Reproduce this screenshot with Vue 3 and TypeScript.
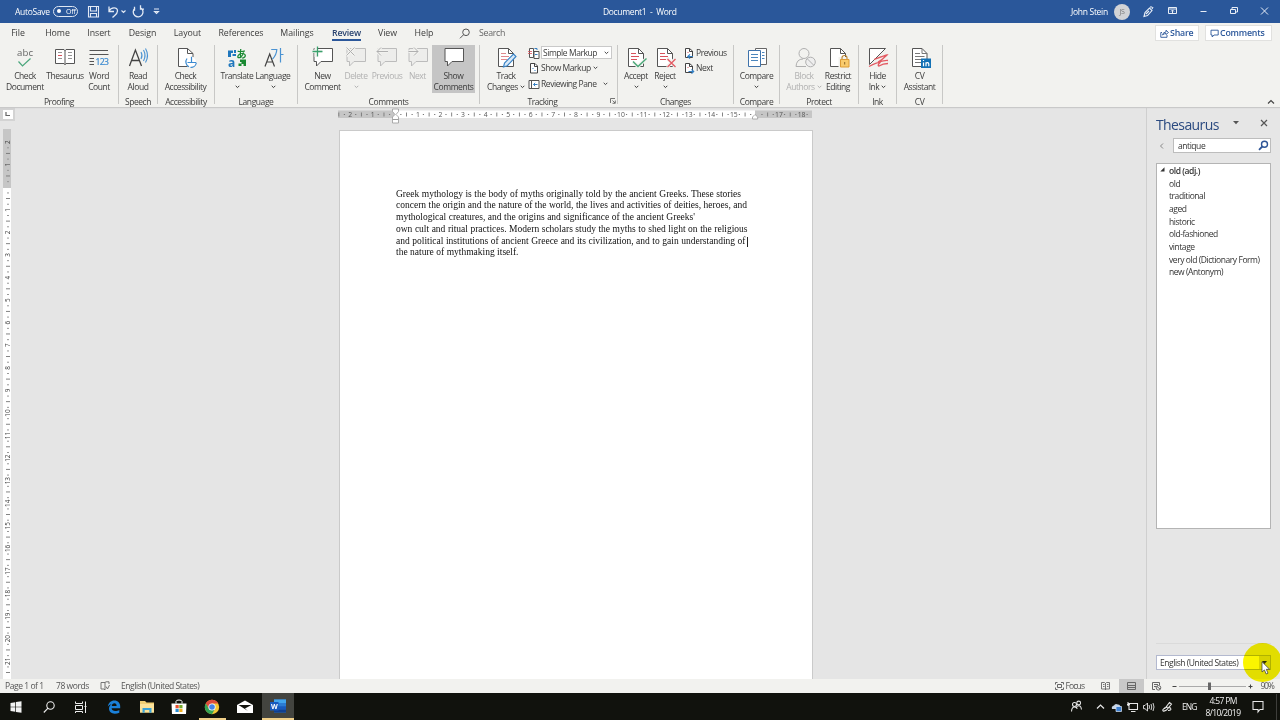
<script setup lang="ts">
interface Btn { id: string; w: number; icon: string; lines: string[]; arrow?: number; dim?: boolean; active?: boolean }
interface Row { icon: string; label: string; arrow?: boolean; box?: boolean }
interface Group { name: string; w: number; pad: number; shift?: number; btns: Btn[]; rows?: Row[]; launcher?: boolean }

const bubble = (stroke: string, fill: string) =>
  `<path d="M-9 3.5H9.5V16.5H-2L-6.5 21V16.5H-9Z" fill="${fill}" stroke="${stroke}"/>`
const pageShape = 'M-7.5 3.5H2.5L7.5 8.5V21.5H-7.5Z'
const redLines = '<path d="M-5 8.5H0M-5 11.5H3M-5 14.5H1" stroke="#d9525c"/>'

const icons: Record<string, string> = {
  check: '<text x="-8" y="11" font-size="9.6" textLength="16" fill="#666">abc</text><path d="M-6.5 16.5L-2.5 21L5.5 13.5" stroke="#4aa67c" stroke-width="1.2"/>',
  book: '<path d="M-9.5 4.5H-1L0 5.5L1 4.5H9.5V18.5H1L0 19.5L-1 18.5H-9.5Z" fill="#fff" stroke="#555"/><path d="M0 5V20" stroke="#555"/><path d="M-7 7.5H-3M-7 13.5H-3M3 7.5H7M3 10.5H7M3 13.5H7" stroke="#888" stroke-width=".9"/><path d="M-7 10.5H-3" stroke="#d9525c"/>',
  count: '<path d="M-9.5 5.5H9M-9.5 9.5H9.5M-9.5 13.5H-5M-9.5 16.5H-5M-9.5 19.5H-5" stroke="#555"/><text x="-3.5" y="20.3" font-size="8.6" textLength="13.5" fill="#3b8ad0" stroke="#3b8ad0" stroke-width=".2">123</text>',
  read: '<path d="M-8.5 21L-2.6 5L3.5 21M-6.4 15.5H1.3" stroke="#444" stroke-width="1.3"/><path d="M3 7Q5 10.5 3 14M5.5 5Q8.5 10.5 5.5 16M7.5 3.5Q11.5 10.5 7.5 17.5" stroke="#4b93d2" stroke-width="1.1"/>',
  access: '<path d="M-7.5 3.5H1.5L7 8.5V21.5H-7.5Z" fill="#fff"/><path d="M1.5 21.5H-7.5V3.5H1.5L7 8.5V12M1.5 3.5V8.5H7" stroke="#555"/><circle cx="5" cy="17" r="5" fill="#fff"/><path d="M1 13.5A5.4 5.4 0 0 0 3 21.7M4.5 22.3A5.4 5.4 0 0 0 10.3 18M5.5 11.7V17.5H10.3M5 17.5H1.5" stroke="#3b8ad0" stroke-width="1.2"/>',
  translate: '<path d="M-9 5.5H-4V8H-6V12H-9ZM-3 5H-1V8H-3Z" fill="#1f77bd"/><path d="M-4.5 10L-1 10" stroke="#1f77bd" stroke-width="2"/><text x="-9" y="21.5" font-size="12" font-weight="700" fill="#1f77bd">a</text><text x="-.7" y="12.5" font-size="10.5" font-weight="700" fill="#1a8a33" font-family="Noto Sans CJK JP">あ</text><path d="M3 14.5H9V21H6.5V19H4.5V21H1.5V18.5H4.5V17H3Z" fill="#1a8a33"/>',
  language: '<path d="M-8 21.5L-3.3 9L1.5 21.5M-6.3 17H-.2" stroke="#444" stroke-width="1.2"/><path d="M-1.8 4.5H3.8Q3.5 10-.5 14M7.5 3V17.5M7.5 9.5H10.5" stroke="#4b93d2" stroke-width="1.2"/>',
  newc: bubble('#555', '#fff') + '<path d="M-7 0V12M-12 6.5H-1" stroke="#f2f2ef" stroke-width="3"/><path d="M-5.5 1.5V11.5M-10.5 6.5H-.5" stroke="#3aa06c" stroke-width="1.3"/>',
  del: bubble('#bcbcbc', '#ededeb') + '<path d="M-9.5 2L-1.5 11M-1.5 2L-9.5 11" stroke="#f2f2ef" stroke-width="3"/><path d="M-9.5 2.5L-1.5 10.5M-1.5 2.5L-9.5 10.5" stroke="#b0b0b0"/>',
  prevc: bubble('#bcbcbc', '#ededeb') + '<path d="M-10 6.5H1M-6 2.5L-10 6.5L-6 10.5" stroke="#f2f2ef" stroke-width="3"/><path d="M-10 6.5H1M-6 2.5L-10 6.5L-6 10.5" stroke="#b0b0b0"/>',
  nextc: bubble('#bcbcbc', '#ededeb') + '<path d="M-9.5 6.5H0M-4 2.5L0 6.5L-4 10.5" stroke="#f2f2ef" stroke-width="3"/><path d="M-9.5 6.5H0M-4 2.5L0 6.5L-4 10.5" stroke="#b0b0b0"/>',
  show: bubble('#555', '#fff'),
  track: `<path d="${pageShape}" fill="#fff" stroke="#555"/><path d="M2.5 3.5V8.5H7.5" stroke="#555"/><path d="M-5 8.5H0M-5 11.5H3M-5 14.5H1" stroke="#e08a8e"/><path d="M-2.5 22L-1.5 18L7.5 9L10 11.5L1.3 20.7Z" fill="#d7e8f7" stroke="#3580c4" stroke-width="1.1"/>`,
  accept: `<path d="${pageShape}" fill="#fff" stroke="#555"/><path d="M2.5 3.5V8.5H7.5" stroke="#555"/>${redLines}<path d="M-3 17L2 21.5L11 13" stroke="#f2f2ef" stroke-width="3.4"/><path d="M-3 16.5L2 21.5L10.5 13.5" stroke="#49a878" stroke-width="1.4"/>`,
  reject: `<path d="${pageShape}" fill="#fff" stroke="#555"/><path d="M2.5 3.5V8.5H7.5" stroke="#555"/>${redLines}<path d="M2 13L11 22M11 13L2 22" stroke="#f2f2ef" stroke-width="3.4"/><path d="M2.5 14L10.5 22M10.5 14L2.5 22" stroke="#e35a62" stroke-width="1.3"/>`,
  compare: '<path d="M-1.5 3.5H9.5V19.5H-1.5Z" fill="#fff" stroke="#666"/><path d="M5 7.5H7.5M5 10.5H7.5M5 13.5H7.5" stroke="#4b86bd"/><path d="M-8.5 5.5H3.5V21.5H-8.5Z" fill="#fff" stroke="#3f73ab"/><path d="M-6 9.5H1M-6 12.5H1M-6 15.5H1" stroke="#4b86bd"/>',
  block: '<circle cx="0" cy="8.5" r="5" stroke="#b0b0b0"/><path d="M-8 21.5Q-7.5 14-1 14M-8 21.5H2" stroke="#b0b0b0"/><circle cx="6.5" cy="17" r="4.8" fill="#eee" stroke="#b0b0b0"/><path d="M3.2 13.7L9.8 20.3" stroke="#b0b0b0"/>',
  restrict: `<path d="${pageShape}" fill="#fff" stroke="#555"/><path d="M2.5 3.5V8.5H7.5" stroke="#555"/><path d="M.5 12H12V24H.5Z" fill="#f2f2ef"/><path d="M4 15V12.8Q4 10.5 6.5 10.5T9 12.8V15" stroke="#b98432" stroke-width="1.1"/><path d="M2.5 14.5H11V22H2.5Z" fill="#f9cb6c" stroke="#dc9b35"/><path d="M6.7 17V19.5" stroke="#8a6427"/>`,
  ink: '<path d="M-8.5 3.5H7.5L-8.5 19.5Z" fill="#fff" stroke="#555"/><path d="M-4 14.5Q8 10 9 10Q4 15 0 17Q8 15 10 15.5M-9 21.5Q0 17 2 17.5Q-1 20.5 1 21Q5 18.5 10 18.5" stroke="#e35a62" stroke-width="1.3"/>',
  cv: '<path d="M-7.5 3.5H2L7 8.5V21.5H-7.5Z" fill="#fff" stroke="#555"/><path d="M2 3.5V8.5H7M-5 8.5H0M-5 11.5H4.5M-5 14.5H4.5M-5 17.5H1" stroke="#777"/><path d="M1 13.5H11V23H1Z" fill="#1371b5"/><path d="M3.5 17.5V21.3M3.5 15V16M6 21.3V17.3M6 18.5Q6.5 17.5 7.6 17.6T8.8 19V21.3" stroke="#fff" stroke-width="1.2"/>',
}

const smallIcons: Record<string, string> = {
  markup: '<path d="M1.5 1.5H5.5V10.5H1.5Z" fill="#fff" stroke="#555"/><path d="M0 4.5H4M0 6.5H4" stroke="#d9525c" stroke-width=".8"/><path d="M6 4.5H11V11.5H6Z" fill="#fff" stroke="#555"/><path d="M7 7.5H9.5" stroke="#3580c4"/><path d="M6.5 1.5H9V3" stroke="#3580c4"/>',
  showm: '<path d="M2.5 1.5H7L9.5 4V11H2.5Z" fill="#fff" stroke="#444"/><path d="M6.5 1.5V4.5H9.5" stroke="#444"/><path d="M4.5 6.5H5.5M6.5 8.5H7.5" stroke="#3580c4"/>',
  pane: '<path d="M1 2.5H11V10.5H1Z" fill="#fff" stroke="#555"/><path d="M3.5 2.5V10.5" stroke="#555"/><path d="M9.5 6.5H5.5M7.2 4.8L5.5 6.5L7.2 8.2" stroke="#3580c4"/>',
  prev: '<path d="M2.5 1.5H6.5L9.5 4V10.5H2.5Z" fill="#fff" stroke="#444"/><path d="M6.5 1.5V4.5H9.5" stroke="#444"/><path d="M4.5 5.5H5.5" stroke="#d9525c"/><path d="M10 9.5H5M7 7.3L4.8 9.5L7 11.7" stroke="#3580c4" stroke-width="1.2"/>',
  next: '<path d="M2.5 1.5H6.5L9.5 4V10.5H2.5Z" fill="#fff" stroke="#444"/><path d="M6.5 1.5V4.5H9.5" stroke="#444"/><path d="M4.5 5.5H5.5" stroke="#d9525c"/><path d="M5.5 9.5H10.5M8.5 7.3L10.7 9.5L8.5 11.7" stroke="#3580c4" stroke-width="1.2"/>',
}

const groups: Group[] = [
  { name: 'Proofing', w: 119, pad: 4, btns: [
    { id: 'cd', w: 42, icon: 'check', lines: ['Check', 'Document'] },
    { id: 'th', w: 38, icon: 'book', lines: ['Thesaurus'] },
    { id: 'wc', w: 30, icon: 'count', lines: ['Word', 'Count'] }] },
  { name: 'Speech', w: 39, pad: 4, btns: [{ id: 'ra', w: 30, icon: 'read', lines: ['Read', 'Aloud'] }] },
  { name: 'Accessibility', w: 57, pad: 2, btns: [{ id: 'ca', w: 51, icon: 'access', lines: ['Check', 'Accessibility'] }] },
  { name: 'Language', w: 83, pad: 4, btns: [
    { id: 'tr', w: 36, icon: 'translate', lines: ['Translate'], arrow: 2 },
    { id: 'la', w: 36, icon: 'language', lines: ['Language'], arrow: 2 }] },
  { name: 'Comments', w: 182, pad: 6, btns: [
    { id: 'nc', w: 37, icon: 'newc', lines: ['New', 'Comment'] },
    { id: 'de', w: 30, icon: 'del', lines: ['Delete'], arrow: 2, dim: true },
    { id: 'pr', w: 32, icon: 'prevc', lines: ['Previous'], dim: true },
    { id: 'ne', w: 29, icon: 'nextc', lines: ['Next'], dim: true },
    { id: 'sc', w: 43, icon: 'show', lines: ['Show', 'Comments'], active: true }] },
  { name: 'Tracking', w: 138, pad: 7, shift: -6, launcher: true, btns: [{ id: 'tc', w: 38, icon: 'track', lines: ['Track', 'Changes'], arrow: 1 }],
    rows: [{ icon: 'markup', label: 'Simple Markup', box: true, arrow: true }, { icon: 'showm', label: 'Show Markup', arrow: true }, { icon: 'pane', label: 'Reviewing Pane', arrow: true }] },
  { name: 'Changes', w: 116, pad: 4, btns: [
    { id: 'ac', w: 28, icon: 'accept', lines: ['Accept'], arrow: 2 },
    { id: 're', w: 30, icon: 'reject', lines: ['Reject'], arrow: 2 }],
    rows: [{ icon: 'prev', label: 'Previous' }, { icon: 'next', label: 'Next' }] },
  { name: 'Compare', w: 46, pad: 2, btns: [{ id: 'co', w: 41, icon: 'compare', lines: ['Compare'], arrow: 2 }] },
  { name: 'Protect', w: 79, pad: 5, btns: [
    { id: 'ba', w: 38, icon: 'block', lines: ['Block', 'Authors'], arrow: 1, dim: true },
    { id: 'rs', w: 30, icon: 'restrict', lines: ['Restrict', 'Editing'] }] },
  { name: 'Ink', w: 38, pad: 4, btns: [{ id: 'hi', w: 29, icon: 'ink', lines: ['Hide', 'Ink'], arrow: 1 }] },
  { name: 'CV', w: 46, pad: 3, btns: [{ id: 'cv', w: 39, icon: 'cv', lines: ['CV', 'Assistant'] }] },
]

const tabs = [
  { t: 'File', w: 36 }, { t: 'Home', w: 43 }, { t: 'Insert', w: 40 }, { t: 'Design', w: 47 }, { t: 'Layout', w: 43 },
  { t: 'References', w: 64 }, { t: 'Mailings', w: 48 }, { t: 'Review', w: 51 }, { t: 'View', w: 31 }, { t: 'Help', w: 42 },
]

const lines = [
  { t: 'Greek mythology is the body of myths originally told by the ancient Greeks. These stories', w: 345 },
  { t: 'concern the origin and the nature of the world, the lives and activities of deities, heroes, and', w: 351 },
  { t: "mythological creatures, and the origins and significance of the ancient Greeks'", w: 299 },
  { t: 'own cult and ritual practices. Modern scholars study the myths to shed light on the religious', w: 351.5 },
  { t: 'and political institutions of ancient Greece and its civilization, and to gain understanding of', w: 349.5 },
  { t: 'the nature of mythmaking itself.', w: 122.5 },
]

const CM = 22.57
interface Mark { p: number; kind: 'n' | 't' | 'd'; n: number }
function marks(from: number, to: number, skip: number[]): Mark[] {
  const out: Mark[] = []
  for (let q = from * 4; q <= to * 4; q++) {
    const m = ((q % 4) + 4) % 4
    const n = Math.abs(q / 4)
    if (m === 0) { if (q !== 0 && !skip.includes(q / 4)) out.push({ p: (q / 4) * CM, kind: 'n', n }) }
    else out.push({ p: (q / 4) * CM, kind: m === 2 ? 't' : 'd', n })
  }
  return out
}
const hMarks = marks(-2.5, 18.25, [16])
const vMarks = marks(-2, 21.5, [])

const words = ['old', 'traditional', 'aged', 'historic', 'old-fashioned', 'vintage', 'very old (Dictionary Form)', 'new (Antonym)']
</script>

<template>
  <div class="app">
    <header class="title">
      <span class="autosave">AutoSave</span>
      <span class="toggle"><i></i>Off</span>
      <svg class="quick" width="90" height="23" viewBox="0 0 90 23" fill="none" stroke="#e3eaf5" stroke-width="1.1">
        <path d="M2.5 6.5H12.5V17H2.5ZM4.5 6.5V11H10.5V6.5M4.5 17V13.5H10.5V17" />
        <path d="M23 6.5V11.5H28M23 11C25 7 31.5 6.500 31.500 11C31.500 14 29 15 26.500 17.500" stroke-width="1.300" />
        <path d="M35.500 10.500L37.500 12.500L39.500 10.500" />
        <path d="M49 8.500A4.900 4.900 0 1 0 54.500 8M48.500 7V11M54.500 5.500V9.500H58" transform="translate(0 -.3)" stroke-width="1.300" />
        <path d="M68 9H73M68.500 11.500H72.500L70.500 13.500Z" />
      </svg>
      <span class="doc">Document1&nbsp; -&nbsp; Word</span>
      <span class="user">John Stein</span>
      <span class="avatar">JS</span>
      <svg class="win" width="140" height="23" viewBox="1140 0 140 23" fill="none" stroke="#e8eef7">
        <path d="M1144 16.500L1145 12.500L1149.500 8L1152 10.500L1147.500 15.500ZM1151 6V8M1153 7L1152 9M1146 14L1149 11" stroke-width="1.100" />
        <path d="M1168.500 7.500H1176.500V13.500H1168.500ZM1168.500 9H1176.500M1172.500 13V10.200M1171 11.500L1172.500 10L1174 11.500" />
        <path d="M1200.500 11.500H1206.500" />
        <path d="M1230.500 9.500H1235.500V13.500H1230.500ZM1232 9.500V7.500H1237.500V12H1236" />
        <path d="M1261 7.500L1268 14.500M1268 7.500L1261 14.500" />
      </svg>
    </header>

    <nav class="tabs">
      <span v-for="t in tabs" :key="t.t" class="tab" :class="{ on: t.t === 'Review' }" :style="{ width: t.w + 'px' }"><b>{{ t.t }}</b></span>
      <svg width="12" height="12" viewBox="0 0 12 12" fill="none" stroke="#555"><circle cx="7" cy="4.300" r="3.300" /><path d="M4.600 6.700L1 10.300" /></svg>
      <span class="search">Search</span>
      <span class="pill share"><svg width="9" height="9" viewBox="0 0 9 9" fill="none" stroke="#2b579a" stroke-width=".9"><path d="M2 3.500H.8V8.300H7V6M2.500 6Q3 3 6 3V1.200L8.500 3.500L6 5.500V4.500Q4 4.500 2.500 6Z" /></svg><b>Share</b></span>
      <span class="pill comm"><svg width="9" height="9" viewBox="0 0 9 9" fill="none" stroke="#2b579a" stroke-width=".9"><path d="M1 1.200H8.200V6H4L2.200 8V6H1Z" /></svg><b>Comments</b></span>
    </nav>

    <section class="ribbon">
      <div v-for="g in groups" :key="g.name" class="group" :style="{ width: g.w + 'px', paddingLeft: g.pad + 'px' }">
        <div class="tools">
          <div v-for="b in g.btns" :key="b.id" class="btn" :class="{ dim: b.dim, active: b.active }" :style="{ width: b.w + 'px' }">
            <svg class="ico" width="28" height="24" viewBox="-14 0 28 24" fill="none" v-html="icons[b.icon]" />
            <span class="lbl">{{ b.lines[0] }}</span>
            <span class="lbl">{{ b.lines[1] }}<svg v-if="b.arrow" class="dd" :class="{ inline: b.arrow === 1 }" width="5" height="4" viewBox="0 0 5 4" fill="none" stroke="currentColor"><path d="M.7 .8L2.500 2.600L4.300 .8" /></svg></span>
          </div>
          <div v-if="g.rows" class="rows">
            <div v-for="r in g.rows" :key="r.label" class="row" :class="{ boxed: r.box, wide: r.icon === 'pane' }">
              <svg width="12" height="12" viewBox="0 0 12 12" fill="none" v-html="smallIcons[r.icon]" />
              <span class="rl"><em>{{ r.label }}</em><svg v-if="r.arrow" class="dd" width="5" height="4" viewBox="0 0 5 4" fill="none" stroke="#444"><path d="M.7 .8L2.500 2.600L4.300 .8" /></svg></span>
            </div>
          </div>
        </div>
        <div class="gname" :style="{ marginLeft: -g.pad + (g.shift || 0) * 2 + 'px' }">{{ g.name }}</div>
        <svg v-if="g.launcher" class="launch" width="6" height="6" viewBox="0 0 6 6" fill="none" stroke="#555" stroke-width=".8"><path d="M.5 5V.5H5M2.500 2.500L5 5M5.300 2.500V5.300H2.500" /></svg>
      </div>
      <svg class="collapse" width="8" height="6" viewBox="0 0 8 6" fill="none" stroke="#444" stroke-width="1.200"><path d="M1 4.500L4 1.500L7 4.500" /></svg>
    </section>

    <main class="work">
      <div class="editor">
        <div class="corner"><i><svg width="5" height="5" viewBox="0 0 5 5" fill="none" stroke="#666"><path d="M1 0V3.500H5" stroke-width="1.200" /></svg></i></div>
        <svg class="hruler" width="480" height="23" viewBox="338 107 480 23">
          <rect x="338" y="110.500" width="57" height="7.500" fill="#c6c6c6" />
          <rect x="395" y="110.500" width="360" height="7.500" fill="#fff" />
          <rect x="755" y="110.500" width="57" height="7.500" fill="#c6c6c6" />
          <g v-for="m in hMarks" :key="m.p">
            <text v-if="m.kind === 'n'" :x="395.300 + m.p" y="117" font-size="6.800" text-anchor="middle" fill="#555">{{ m.n }}</text>
            <rect v-else-if="m.kind === 't'" :x="394.800 + m.p" y="112.500" width=".9" height="4" fill="#777" />
            <rect v-else :x="394.600 + m.p" y="114" width="1.200" height="1" fill="#777" />
          </g>
          <path d="M392.500 109H398.500V111.500L396 114.500L398.500 117V119.500H392.500V117L395 114.500L392.500 111.500ZM392.500 119.500H398.500V123H392.500Z" fill="#fff" stroke="#999" stroke-width=".8" />
          <path d="M752.500 119V117L755 114.500L757.700 117V119Z" fill="#fff" stroke="#999" stroke-width=".8" />
        </svg>
        <svg class="vruler" width="16" height="549" viewBox="0 130 16 549">
          <rect x="3" y="129" width="8" height="59" fill="#c6c6c6" />
          <rect x="3" y="188" width="8" height="491" fill="#fff" />
          <g v-for="m in vMarks" :key="m.p" :transform="`translate(7.500 ${187.300 + m.p})`">
            <text v-if="m.kind === 'n'" transform="rotate(-90)" y="2.400" font-size="6.400" text-anchor="middle" fill="#444">{{ m.n }}</text>
            <rect v-else-if="m.kind === 't'" x="-1.500" y="-.5" width="4" height=".9" fill="#777" />
            <rect v-else x="-.5" y="-.5" width="2" height="1" fill="#999" />
          </g>
        </svg>
        <article class="page">
          <p v-for="(l, i) in lines" :key="i" class="line" :style="{ width: l.w + 'px' }">{{ l.t }}<i v-if="i === 4" class="caret"></i></p>
        </article>
      </div>

      <aside class="pane">
        <div class="phead">
          <h2>Thesaurus</h2>
          <svg width="36" height="10" viewBox="0 0 36 10"><path d="M1 3H7L4 6.200Z" fill="#555" /><path d="M29 2L35 8M35 2L29 8" stroke="#555" stroke-width="1.200" /></svg>
        </div>
        <div class="psearch">
          <svg width="5" height="8" viewBox="0 0 5 8" fill="none" stroke="#888"><path d="M4 1.500L1.500 4L4 6.500" /></svg>
          <div class="field"><span>antique</span><svg width="11" height="11" viewBox="0 0 11 11" fill="none" stroke="#2f5597" stroke-width="1.400"><circle cx="6.500" cy="4.200" r="3" /><path d="M4.300 6.500L1 9.800" stroke-width="1.800" /></svg></div>
        </div>
        <ul class="list">
          <li class="head"><svg width="5" height="5" viewBox="0 0 5 5"><path d="M4.500 .3V4.500H.3Z" fill="#333" /></svg>old (adj.)</li>
          <li v-for="w in words" :key="w">{{ w }}</li>
        </ul>
        <div class="rule"></div>
        <div class="lang"><span>English (United States)</span><i><svg width="5" height="3" viewBox="0 0 5 3"><path d="M0 0H5L2.500 3Z" fill="#333" /></svg></i></div>
      </aside>
    </main>

    <footer class="status">
      <span class="s1">Page 1 of 1</span><span class="s2">78 words</span>
      <svg class="proof" width="10" height="10" viewBox="0 0 10 10" fill="none" stroke="#666" stroke-width=".9"><path d="M5 1.500H1V8H4L5 9V1.500L6 .8H9V3M6 5.500L7.500 8L9.500 4" /></svg>
      <span class="s3">English (United States)</span>
      <svg class="views" width="226" height="14" viewBox="1050 679 226 14" fill="none" stroke="#666">
        <path d="M1055.500 684.500V682.500H1057.500M1061 682.500H1063.500V684.500M1063.500 687.500V689.500H1061M1057.500 689.500H1055.500V687.500M1057.500 684.500H1061.500V687.500H1057.500Z" />
        <text x="1065.500" y="689" font-size="8.600" textLength="19.500" fill="#555" stroke="none">Focus</text>
        <path d="M1105.500 683V690M1101.500 682.500H1104.500L1105.500 683.500L1106.500 682.500H1109.500V689H1101.500ZM1103 684.500H1104.500M1103 686.500H1104.500M1107 684.500H1108.500M1107 686.500H1108.500" stroke-width=".9" />
        <path d="M1119 679H1144V693H1119Z" fill="#c8c8c8" stroke="none" />
        <path d="M1127.500 682.500H1135.500V689.500H1127.500ZM1127.500 685.500H1135.500M1127.500 687.500H1135.500" />
        <path d="M1152.500 689.500V682.500H1159.500V685M1154 684.500H1158M1154 686.500H1156M1152.500 689.500H1155" />
        <circle cx="1158.500" cy="687.800" r="2.300" /><path d="M1157 686.500L1160 689" />
        <path d="M1172.500 686.500H1176.500M1248.500 686.500H1252.500M1250.500 684.500V688.500" stroke="#444" stroke-width="1.100" />
        <path d="M1179 686.500H1246" stroke="#aaa" />
        <path d="M1208 682.500H1211V690H1208Z" fill="#666" stroke="none" />
        <text x="1260.500" y="689" font-size="8.600" textLength="14.300" fill="#555" stroke="none">90%</text>
      </svg>
    </footer>

    <div class="taskbar">
      <span class="cell"><svg width="14" height="14" viewBox="0 0 14 14" fill="#f2f2f2"><path d="M1.500 3L6.300 2.200V6.700H1.500ZM7 2.100L12.500 1.200V6.700H7ZM1.500 7.300H6.300V11.800L1.500 11.100ZM7 7.300H12.500V12.800L7 11.900Z" /></svg></span>
      <span class="cell"><svg width="14" height="14" viewBox="0 0 14 14" fill="none" stroke="#eee" stroke-width="1.100"><circle cx="8.500" cy="5.500" r="3.700" /><path d="M6 8.200L1.800 12.500" /></svg></span>
      <span class="cell"><svg width="14" height="14" viewBox="0 0 14 14" fill="none" stroke="#eee"><path d="M1.500 1.500V3.500H8.500V1.500M1.500 5.500H8.500V9.500H1.500ZM1.500 13V11.500H8.500V13M11.500 1.500V13M10.500 6.500H12.500" /></svg></span>
      <span class="cell edge"><svg width="14" height="14" viewBox="0 0 14 14"><path d="M.8 6.500C1.500 2.800 4 .5 7.300 .5C11 .5 13.300 3.200 13.200 6.400V8.300H4.600C4.800 10.300 6.300 11 8.200 11C9.800 11 11.200 10.500 12.300 9.900V12.700C11 13.400 9.400 13.700 7.800 13.700C4.300 13.700 2 11.700 2 8.600C2 6.600 3 5 4.700 4.200C3 4.500 1.600 5.400 .8 6.500ZM4.800 5.900H9.600C9.600 4.300 8.900 3.300 7.400 3.300C5.900 3.300 5 4.400 4.800 5.900Z" fill="#1a80d9" /></svg></span>
      <span class="cell"><svg width="16" height="14" viewBox="0 0 16 14"><path d="M1 1H6L7.500 2.500H15V12.500H1Z" fill="#f0ce74" /><path d="M1 4H15V12.500H1Z" fill="#fbe29a" /><path d="M3.500 12.800V8H12.500V12.800H10.300V10H5.700V12.800Z" fill="#3aa3d8" /></svg></span>
      <span class="cell"><svg width="16" height="16" viewBox="0 0 16 16"><path d="M5 4.500V2.500Q5 1 8 1T11 2.500V4.500" stroke="#fff" fill="none" /><path d="M.5 4.500H15.500L15 15H1Z" fill="#fff" /><path d="M4.500 6H7.700V9.200H4.500Z" fill="#e8502e" /><path d="M8.300 6H11.500V9.200H8.300Z" fill="#74a82c" /><path d="M4.500 9.800H7.700V13H4.500Z" fill="#2a8ed4" /><path d="M8.300 9.800H11.500V13H8.300Z" fill="#efae22" /></svg></span>
      <span class="cell run"><svg width="16" height="16" viewBox="0 0 16 16"><circle cx="8" cy="8" r="7.200" fill="#f3c737" /><path d="M1.760 4.400A7.200 7.200 0 0 1 14.240 4.400H8L4.900 9.800Z" fill="#dc4b3e" /><path d="M1.760 4.400A7.200 7.200 0 0 0 8 15.200L11 9.800L4.900 9.800Z" fill="#35a355" /><circle cx="8" cy="8" r="3.600" fill="#fff" /><circle cx="8" cy="8" r="2.800" fill="#4484e8" /></svg></span>
      <span class="cell"><svg width="18" height="14" viewBox="0 0 18 14"><path d="M1 5L9 .5L17 5V13H1Z" fill="#fff" /><path d="M2.500 5H15.500L9 8.500L12 11Z" fill="#12130d" /></svg></span>
      <span class="cell word"><svg width="18" height="16" viewBox="0 0 18 16"><path d="M5 1.500H17V14.500H5Z" fill="#2b7cd3" /><path d="M5 1.500H17V5H5Z" fill="#41a5ee" /><path d="M5 8.300H17V11.500H5Z" fill="#185abd" /><path d="M5 11.500H17V14.500H5Z" fill="#103f91" /><path d="M1 4H9.500V12.500H1Z" fill="#185abd" /><text x="1.900" y="10.700" font-size="7" font-weight="700" fill="#fff">W</text></svg></span>
      <svg class="tray" width="210" height="27" viewBox="1070 693 210 27" fill="none" stroke="#e8e8e8" stroke-width="1.050">
        <circle cx="1074.500" cy="704.500" r="2" /><path d="M1071.500 711.500Q1071.800 707 1074.500 707T1077 709" /><circle cx="1078.700" cy="703" r="1.900" /><path d="M1076.500 706.500Q1080.800 704 1081.500 709.500" />
        <path d="M1097 708.500L1100.500 705L1104 708.500" stroke-width="1.200" />
        <path d="M1112 709Q1111 706.500 1114 705.500Q1115 703 1118 704.500Q1121 704.500 1120.500 709Z" fill="#c9d6e6" stroke="none" /><path d="M1116 706.500H1121.500V711.500H1116Z" fill="#3c7fd0" stroke="#dde8f5" stroke-width=".7" />
        <path d="M1129 703.500H1137.500V709.500H1129ZM1131 711.500H1135.500M1128 702V706M1127 704.500H1130" />
        <path d="M1143.500 705.500H1145L1147.500 703V711L1145 708.700H1143.500ZM1149 705Q1150 707 1149 709M1151 704Q1152.500 707 1151 710M1153 703Q1155 707 1153 711" stroke-width=".9" />
        <path d="M1164.500 709L1169.500 702.500L1171.500 704L1166.500 710Q1162 712.500 1163 709.500Q1165.500 706 1170.500 708Q1172 710.500 1168 710.500" />
        <g fill="#f0f0f0" stroke="none"><text x="1182" y="709.500" font-size="8.500" textLength="15.500">ENG</text><text x="1209.500" y="703.500" font-size="8.500" textLength="28">4:57 PM</text><text x="1205.500" y="715.500" font-size="8.500" textLength="35.500">8/10/2019</text></g>
        <path d="M1253 701.500H1263V709.500H1260L1258 712L1258 709.500H1253Z" /><path d="M1276.500 694V720" stroke="#4a4a48" stroke-width=".8" />
      </svg>
    </div>

    <div class="spot"></div>
    <svg class="cursor" width="11" height="15" viewBox="0 0 11 15"><path d="M1 .8V11L3.400 8.900L5.200 13L7 12.200L5.300 8.300H8.600Z" fill="#fff" stroke="#333" stroke-width=".7" /></svg>
  </div>
</template>

<style>
html, body { margin: 0; overflow: hidden; }
</style>

<style scoped>
.app { position: relative; width: 1280px; height: 720px; overflow: hidden; display: flex; flex-direction: column; background: #e5e5e5; font-family: "Open Sans", "Noto Sans", sans-serif; font-size: 8.500px; color: #3c3c3c; letter-spacing: -.44px; }
svg { display: block; flex: none; overflow: visible; letter-spacing: 0; }
i, em, b { font-style: normal; font-weight: inherit; }
.title { height: 23px; flex: none; background: #2a579a; color: #fff; display: flex; align-items: center; box-sizing: border-box; }
.autosave { margin-left: 15px; width: 38px; margin-top: -1px; letter-spacing: -.3px; }
.toggle { width: 23px; height: 9px; border: 1px solid #dfe7f3; border-radius: 6px; font-size: 7px; line-height: 9px; display: flex; align-items: center; gap: 5px; margin-top: -1px; letter-spacing: -.1px; }
.toggle i { width: 4px; height: 4px; border-radius: 50%; background: #fff; margin-left: 3px; }
.quick { margin-left: 8px; }
.doc { margin-left: 427px; width: 160px; margin-top: -1px; letter-spacing: -.33px; }
.user { margin-left: 308px; width: 43px; letter-spacing: -.3px; }
.avatar { width: 16px; height: 16px; border-radius: 50%; background: #d2d3d6; color: #777; font-size: 7px; line-height: 16px; text-align: center; }
.win { margin-left: auto; }
.tabs { height: 21px; flex: none; background: #f2f2ef; display: flex; align-items: center; font-size: 8.800px; letter-spacing: -.05px; }
.tab { text-align: center; height: 21px; line-height: 20px; white-space: nowrap; }
.tab b { display: inline-block; height: 16px; }
.tab.on { color: #2b4470; }
.tab.on b { font-weight: 600; border-bottom: 2px solid #2b579a; letter-spacing: -.2px; }
.tabs > svg { margin-left: 14px; }
.search { margin-left: 8px; color: #666; margin-top: -1px; letter-spacing: -.3px; }
.pill { background: #fff; border: 1px solid #e1e1df; box-sizing: border-box; height: 16px; color: #2b579a; font-weight: 600; display: flex; align-items: center; gap: 1px; padding-left: 4px; letter-spacing: -.2px; margin-top: -1px; }
.pill b { margin-top: -1px; }
.share { margin-left: auto; width: 44px; }
.comm { width: 67px; margin-left: 6px; margin-right: 8px; }
.ribbon { height: 63px; flex: none; background: #f2f2ef; display: flex; position: relative; box-shadow: 0 1px 1px #c9c9c9; z-index: 1; }
.group { position: relative; box-sizing: border-box; height: 59px; margin-top: 1px; border-right: 1px solid #c8c8c6; }
.tools { display: flex; height: 50px; }
.btn { height: 48px; display: flex; flex-direction: column; align-items: center; color: #3c3c3c; }
.btn .ico { height: 24px; margin-bottom: 1px; }
.lbl { height: 11px; line-height: 11px; white-space: nowrap; display: flex; align-items: center; justify-content: center; }
.dd.inline { margin: 1px 0 0 2px; }
.btn.dim { color: #b1b1b1; }
.btn.active { background: #c5c5c5; }
.rows { padding: 0 0 0 3px; display: flex; flex-direction: column; }
.row { height: 15.500px; display: flex; align-items: center; gap: 1px; white-space: nowrap; }
.rl { display: flex; align-items: center; height: 13px; gap: 2px; }
.rl em { margin-top: -1px; }
.boxed .rl { margin-left: 0; background: #fff; border: 1px solid #c9c9c9; box-sizing: border-box; padding: 0 2px 0 1px; width: 71px; justify-content: space-between; }
.wide .rl { gap: 6px; }
.gname { text-align: center; height: 9px; line-height: 9px; margin-top: 2px; }
.launch { position: absolute; right: 1px; bottom: 0; }
.collapse { position: absolute; right: 5px; bottom: 2px; }
.work { height: 572px; flex: none; display: flex; }
.editor { width: 1146px; height: 572px; display: grid; grid-template-columns: 16px 1fr; grid-template-rows: 23px 549px; overflow: hidden; }
.corner { width: 15px; height: 14px; background: #d3d3d3; display: flex; align-items: center; justify-content: center; }
.corner i { width: 10px; height: 9px; background: #fff; display: flex; align-items: center; justify-content: center; }
.hruler { margin-left: 322px; }
.page { margin-left: 323px; width: 474px; height: 560px; box-sizing: border-box; border: 1px solid #cacaca; background: #fff; padding: 57.600px 0 0 56px; }
.line { margin: 0; height: 11.750px; line-height: 11.750px; font-family: "Liberation Serif", "Times New Roman", serif; font-size: 9.500px; letter-spacing: 0; color: #111; text-align: justify; text-align-last: justify; white-space: nowrap; position: relative; }
.caret { position: absolute; right: -2px; top: 1px; width: 1px; height: 10px; background: #222; }
.pane { width: 134px; height: 572px; box-sizing: border-box; border-left: 1px solid #cfcfcf; background: #e6e6e6; padding: 9px 9px 0 9px; color: #333; }
.phead { display: flex; height: 18px; justify-content: space-between; }
.phead svg { margin: 2px 3px 0 0; }
.phead h2 { margin: 0; font-size: 14px; font-weight: 400; line-height: 18px; color: #2b4a80; letter-spacing: -.6px; }
.psearch { display: flex; align-items: center; justify-content: space-between; height: 15px; margin-top: 4px; padding-left: 3px; }
.field { width: 98px; height: 15px; box-sizing: border-box; border: 1px solid #bdbdbd; background: #fff; display: flex; align-items: center; justify-content: space-between; padding: 0 1px 0 4px; }
.field span { margin-top: 0; }
.list { list-style: none; margin: 10px 0 0; padding: 1px 0 0; height: 366px; box-sizing: border-box; border: 1px solid #b4b4b4; background: #fff; }
.list li { height: 12.670px; line-height: 12.670px; padding-left: 12px; white-space: nowrap; }
.list .head { font-weight: 600; display: flex; padding-left: 3px; gap: 4px; }
.list .head svg { margin-top: 2px; }
.rule { border-top: 1px solid #dadada; margin-top: 114px; }
.lang { margin-top: 11px; height: 15px; box-sizing: border-box; border: 1px solid #b3b9cf; background: #fff; display: flex; justify-content: space-between; align-items: center; padding-left: 3px; white-space: nowrap; }
.lang i { width: 11px; height: 13px; background: #dcdcdc; display: flex; align-items: center; justify-content: center; }
.status { height: 14px; flex: none; background: #f2f2ef; display: flex; align-items: center; color: #555; }
.status > span { margin-top: -1px; }
.s1 { margin-left: 5px; width: 51px; }
.s2 { width: 44px; }
.s3 { margin-left: 11px; }
.views { margin-left: auto; margin-right: 4px; }
.taskbar { height: 27px; flex: none; background: #11120d; display: flex; }
.cell { width: 32px; height: 27px; margin-right: .7px; box-sizing: border-box; display: flex; align-items: center; justify-content: center; }
.run { background: linear-gradient(#f0cf88, #f0cf88) center bottom / 27px 2px no-repeat; }
.word { background: #43443f; border-bottom: 2px solid #f0cf88; }
.tray { margin-left: auto; }
.spot { position: absolute; left: 1242.500px; top: 643px; width: 39px; height: 39px; border-radius: 50%; background: #fbf500; mix-blend-mode: multiply; z-index: 2; }
.cursor { position: absolute; left: 1261px; top: 661px; z-index: 3; }
</style>
